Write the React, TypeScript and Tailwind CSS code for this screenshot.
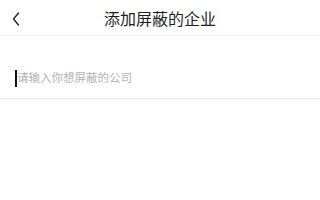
export default function App() {
  return (
    <div
      className="w-[320px] h-[200px] bg-white overflow-hidden"
      style={{ fontFamily: '"Noto Sans CJK SC", "Noto Sans", sans-serif' }}
    >
      <div className="relative h-[36px] flex items-center justify-center border-b border-[#f2f2f2]">
        <button className="absolute left-[9px] top-[11px] w-[14px] h-[15px] flex items-center justify-center">
          <svg width="8" height="14" viewBox="0 0 8 14" fill="none">
            <path d="M6.5 1L1.5 7L6.5 13" stroke="#222" strokeWidth="1.4" strokeLinecap="round" strokeLinejoin="round" />
          </svg>
        </button>
        <h1 className="text-[16px] leading-none text-[#1f1f1f] mt-[1px]">添加屏蔽的企业</h1>
      </div>
      <div className="pt-[22px]">
        <div className="h-[41px] flex items-center border-b border-[#ebebeb] px-[15px]">
          <span className="w-[2px] h-[17px] bg-[#111]" />
          <span className="text-[11.5px] leading-none text-[#b3b3b3]">请输入你想屏蔽的公司</span>
        </div>
      </div>
    </div>
  );
}
